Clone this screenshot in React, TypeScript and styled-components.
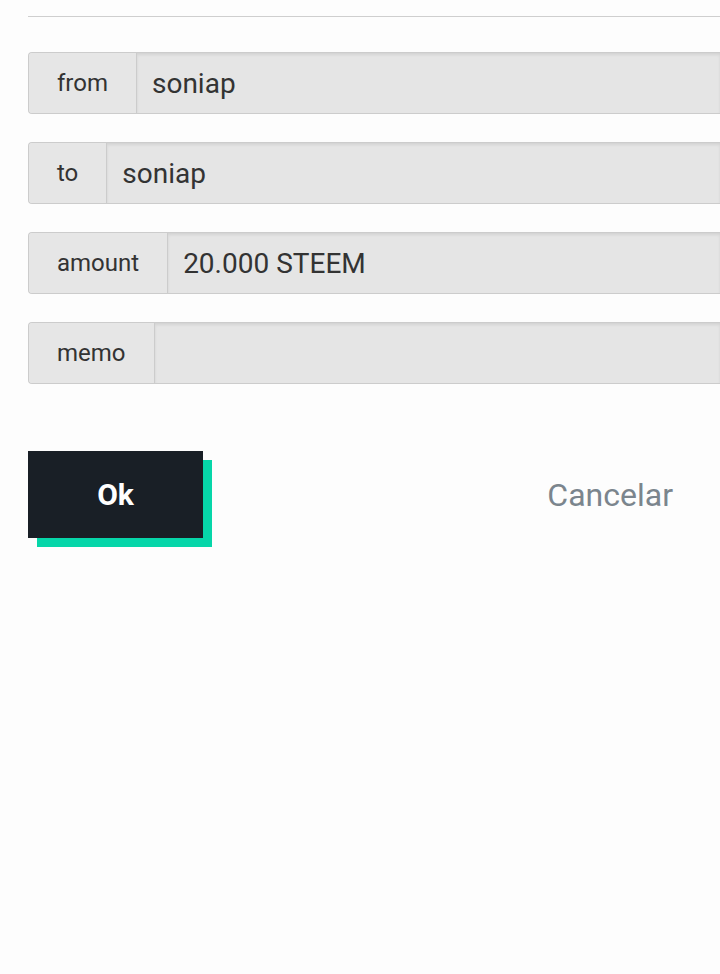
import React from "react";
import styled, { createGlobalStyle } from "styled-components";

const GlobalStyle = createGlobalStyle`
  html, body {
    margin: 0;
    padding: 0;
    background: #fdfdfd;
    overflow: hidden;
  }
  * { box-sizing: border-box; }
`;

const Page = styled.div`
  width: 720px;
  min-height: 974px;
  padding: 16px 0 0 28px;
  font-family: Roboto, "Liberation Sans", sans-serif;
  color: #333;
`;

const Divider = styled.hr`
  margin: 0;
  border: 0;
  border-top: 1px solid #cfcfcf;
`;

const Form = styled.form`
  display: flex;
  flex-direction: column;
  gap: 28px;
  margin-top: 35px;
`;

const Group = styled.div`
  display: flex;
  height: 62px;
  border: 1px solid #cccccc;
  border-right: 0;
  border-radius: 4px 0 0 4px;
  background: #e5e5e5;
  overflow: hidden;
`;

const Label = styled.span`
  display: flex;
  align-items: center;
  padding: 0 28px;
  font-size: 24px;
  color: #333;
  border-right: 1px solid #cccccc;
  background: #e6e6e6;
`;

const Field = styled.input`
  flex: 1;
  min-width: 0;
  border: 0;
  outline: none;
  padding: 0 15px;
  font-family: inherit;
  font-size: 28px;
  color: #333;
  background: #e5e5e5;
  box-shadow: inset 0 2px 3px rgba(0, 0, 0, 0.08);
`;

const Actions = styled.div`
  display: flex;
  align-items: center;
  justify-content: space-between;
  margin-top: 67px;
  padding-right: 47px;
`;

const OkButton = styled.button`
  width: 175px;
  height: 87px;
  border: 0;
  background: #191f26;
  color: #fff;
  font-family: inherit;
  font-size: 30px;
  font-weight: 700;
  box-shadow: 9px 9px 0 #06d6a9;
  cursor: pointer;
`;

const CancelLink = styled.button`
  border: 0;
  background: none;
  padding: 0;
  font-family: inherit;
  font-size: 32px;
  color: #7b858d;
  cursor: pointer;
`;

const rows = [
  { label: "from", value: "soniap" },
  { label: "to", value: "soniap" },
  { label: "amount", value: "20.000 STEEM" },
  { label: "memo", value: "" },
];

const App = (): React.ReactElement => (
  <>
    <GlobalStyle />
    <Page>
      <Divider />
      <Form onSubmit={(e) => e.preventDefault()}>
        {rows.map((r) => (
          <Group key={r.label}>
            <Label>{r.label}</Label>
            <Field defaultValue={r.value} readOnly />
          </Group>
        ))}
      </Form>
      <Actions>
        <OkButton>Ok</OkButton>
        <CancelLink>Cancelar</CancelLink>
      </Actions>
    </Page>
  </>
);

export default App;
